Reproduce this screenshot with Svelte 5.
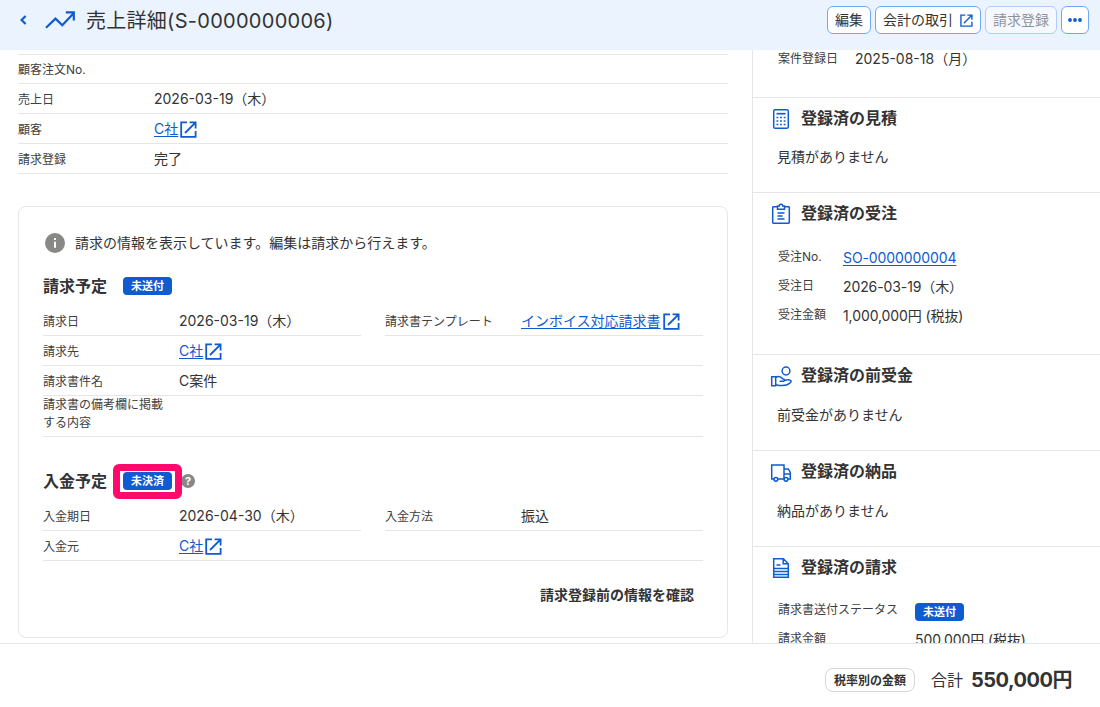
<script lang="ts">
    type Field = { label: string; value?: string; link?: boolean; external?: boolean; badge?: boolean; half?: boolean; tall?: boolean };
    type Section = { title: string; icon: string; empty?: string; labelWidth?: string; fields?: Field[] };

    const saleFields: Field[] = [
        { label: '顧客注文No.' },
        { label: '売上日', value: '2026-03-19（木）' },
        { label: '顧客', value: 'C社', link: true, external: true },
        { label: '請求登録', value: '完了' }
    ];

    const billingFields: Field[] = [
        { label: '請求日', value: '2026-03-19（木）', half: true },
        { label: '請求書テンプレート', value: 'インボイス対応請求書', link: true, external: true, half: true },
        { label: '請求先', value: 'C社', link: true, external: true },
        { label: '請求書件名', value: 'C案件' },
        { label: '請求書の備考欄に掲載する内容', tall: true }
    ];

    const paymentFields: Field[] = [
        { label: '入金期日', value: '2026-04-30（木）', half: true },
        { label: '入金方法', value: '振込', half: true },
        { label: '入金元', value: 'C社', link: true, external: true }
    ];

    const sections: Section[] = [
        { title: '登録済の見積', icon: 'calculator', empty: '見積がありません' },
        {
            title: '登録済の受注',
            icon: 'clipboard',
            fields: [
                { label: '受注No.', value: 'SO-0000000004', link: true },
                { label: '受注日', value: '2026-03-19（木）' },
                { label: '受注金額', value: '1,000,000円 (税抜)' }
            ]
        },
        { title: '登録済の前受金', icon: 'hand', empty: '前受金がありません' },
        { title: '登録済の納品', icon: 'truck', empty: '納品がありません' },
        {
            title: '登録済の請求',
            icon: 'document',
            labelWidth: '137px',
            fields: [
                { label: '請求書送付ステータス', value: '未送付', badge: true },
                { label: '請求金額', value: '500,000円 (税抜)' }
            ]
        }
    ];
</script>

{#snippet externalIcon(size: number)}
    <svg class="external" width={size} height={size} viewBox="0 0 17 17" fill="none" stroke="currentColor" stroke-width="1.8">
        <path d="M7 1.4H1.2v14.4h14.4V10" />
        <path d="M9.6 1.4h6v6M15.4 1.6L5 12" />
    </svg>
{/snippet}

{#snippet fieldValue(field: Field)}
    {#if field.badge}
        <span class="badge">{field.value}</span>
    {:else if field.link}
        <a href="#top">{field.value}</a>{#if field.external}{@render externalIcon(17)}{/if}
    {:else}
        {field.value ?? ''}
    {/if}
{/snippet}

{#snippet fieldGrid(fields: Field[])}
    <dl class="fields">
        {#each fields as field}
            <div class="field" class:half={field.half} class:tall={field.tall}>
                <dt>{field.label}</dt>
                <dd>{@render fieldValue(field)}</dd>
            </div>
        {/each}
    </dl>
{/snippet}

<div class="page">
    <header>
        <svg class="back" width="8" height="10" viewBox="0 0 8 10" fill="none" stroke="currentColor" stroke-width="2.2">
            <path d="M6.6 1L2.6 5l4 4" />
        </svg>
        <svg class="trend" width="30" height="18" viewBox="0 0 30 18" fill="none" stroke="currentColor" stroke-width="2.2">
            <path d="M1 16.8L10.5 7.6l6.8 6.6L28.4 2.4M20.8 1.4h8v8" />
        </svg>
        <h1>売上詳細(S-0000000006)</h1>
        <div class="actions">
            <button>編集</button>
            <button class="with-icon">会計の取引{@render externalIcon(13)}</button>
            <button disabled>請求登録</button>
            <button class="more" aria-label="メニュー">
                <svg width="14" height="4" viewBox="0 0 14 4" fill="currentColor">
                    <circle cx="2" cy="2" r="1.9" /><circle cx="7" cy="2" r="1.9" /><circle cx="12" cy="2" r="1.9" />
                </svg>
            </button>
        </div>
    </header>

    <div class="content">
        <main>
            <div class="sale">
                {@render fieldGrid(saleFields)}
            </div>

            <section class="card">
                <p class="notice">
                    <svg width="20" height="20" viewBox="0 0 20 20">
                        <circle cx="10" cy="10" r="10" fill="#888886" />
                        <path d="M9 5h2v2H9zM9 8.7h2v6H9z" fill="#fff" />
                    </svg>
                    請求の情報を表示しています。編集は請求から行えます。
                </p>

                <div class="heading">
                    <h2>請求予定</h2>
                    <span class="badge">未送付</span>
                </div>
                {@render fieldGrid(billingFields)}

                <div class="heading payment">
                    <h2>入金予定</h2>
                    <span class="badge marked">未決済</span>
                    <span class="help">?</span>
                </div>
                {@render fieldGrid(paymentFields)}

                <div class="confirm">請求登録前の情報を確認</div>
            </section>
        </main>

        <aside>
            <div class="registered">
                <span class="label">案件登録日</span>
                <span class="date">2025-08-18（月）</span>
            </div>
            {#each sections as section}
                <section class="related">
                    <h3>
                        <svg width="22" height="22" viewBox="0 0 22 22" fill="none" stroke="currentColor" stroke-width="1.5">
                            {#if section.icon === 'calculator'}
                                <rect x="3.7" y="1.7" width="14.6" height="18.6" rx="1.6" />
                                <path d="M6.5 5.7h9" stroke-width="1.7" />
                                <path d="M6.5 9.5h9M6.5 13h9M6.5 16.5h9" stroke-dasharray="1.8 1.8" stroke-width="1.6" />
                            {:else if section.icon === 'clipboard'}
                                <path d="M7 3.7H3.4a.7.7 0 0 0-.7.7v15.2c0 .4.3.7.7.7h15.2a.7.7 0 0 0 .7-.7V4.4a.7.7 0 0 0-.7-.7H15" />
                                <path d="M7.5 3h1.8a1.7 1.7 0 0 1 3.4 0h1.8v3.2h-7zM7.5 10h7M7.5 13h5M7.5 16h7" />
                            {:else if section.icon === 'hand'}
                                <circle cx="16" cy="6" r="3.9" />
                                <path d="M1.7 11.7h4v9h-4zM5.7 12.5c2-1.300 4.500-1 6 .4l1.300 1c2 .2 2.200 2.400 0 2.400H9.700M14 15.500c2.500-.8 6-1.400 7 .3.500.9-.3 1.700-1.500 2.600-3 2.700-8 2.600-13.800 1.300" />
                            {:else if section.icon === 'truck'}
                                <path d="M4 18H1.7V4h12.300V18H8M14 8h4.300l2 3.500V18H18M14 13h6.300" />
                                <circle cx="5.9" cy="18.300" r="1.900" />
                                <circle cx="16" cy="18.300" r="1.900" />
                            {:else}
                                <path d="M3.7 1.7h9.6l5 5v13.6H3.7zM13.2 2v4.8H18M6.5 8h4M4 11.500h14M4 14.500h14M4 17.500h14" />
                            {/if}
                        </svg>
                        {section.title}
                    </h3>
                    {#if section.empty}
                        <p>{section.empty}</p>
                    {:else}
                        <dl style="grid-template-columns: {section.labelWidth ?? '65px'} 1fr">
                            {#each section.fields ?? [] as field}
                                <dt>{field.label}</dt>
                                <dd>{@render fieldValue(field)}</dd>
                            {/each}
                        </dl>
                    {/if}
                </section>
            {/each}
        </aside>
    </div>

    <footer>
        <button class="tax">税率別の金額</button>
        <span class="total-label">合計</span>
        <strong>550,000円</strong>
    </footer>
</div>

<style>
    :global(body) {
        margin: 0;
        overflow: hidden;
    }

    .page {
        height: 707px;
        display: flex;
        flex-direction: column;
        overflow: hidden;
        background: #fff;
        color: #333;
        font-family: Inter, "Noto Sans CJK JP", sans-serif;
        font-size: 14px;
        line-height: 20px;
    }

    h1, h2, h3, p, dl, dd {
        margin: 0;
    }

    a {
        color: #0f5bd0;
        text-underline-offset: 2px;
    }

    header {
        flex: none;
        box-sizing: border-box;
        height: 50px;
        padding: 0 11px 10px 19px;
        display: flex;
        align-items: center;
        background: #ebf3ff;
    }

    .back, .trend {
        color: #0f5bd0;
    }

    .trend {
        margin-left: 18px;
    }

    h1 {
        margin: 2px 0 0 11px;
        font-size: 20px;
        font-weight: 400;
        letter-spacing: 0.28px;
        line-height: 30px;
    }

    .actions {
        margin-left: auto;
        display: flex;
        gap: 4px;
    }

    button {
        box-sizing: border-box;
        height: 28px;
        padding: 0 7px;
        display: flex;
        align-items: center;
        justify-content: center;
        border: 1px solid #6ea8fc;
        border-radius: 6px;
        background: #fff;
        color: #333;
        font: inherit;
        white-space: nowrap;
    }

    button:disabled {
        opacity: 0.5;
    }

    .with-icon {
        gap: 7px;
    }

    .more {
        width: 28px;
        padding: 0;
        color: #0f5bd0;
    }

    .external {
        flex: none;
        color: #0f5bd0;
    }

    .content {
        flex: 1;
        min-height: 0;
        display: flex;
        overflow: hidden;
    }

    main {
        box-sizing: border-box;
        width: 752px;
        padding: 4px 24px 0 18px;
    }

    .sale {
        height: 152px;
    }

    .sale .fields {
        border-top: 1px solid #e6e6e6;
    }

    .sale .field:first-child {
        height: 29px;
    }

    .fields {
        display: grid;
        grid-template-columns: 1fr 1fr;
        column-gap: 24px;
    }

    .field {
        grid-column: span 2;
        box-sizing: border-box;
        height: 30px;
        display: flex;
        align-items: center;
        border-bottom: 1px solid #e6e6e6;
    }

    .field.half {
        grid-column: span 1;
    }

    .field.tall {
        height: 41px;
    }

    dt, .label {
        color: #404040;
        font-size: 12px;
        line-height: 18px;
    }

    .field dt {
        flex: none;
        width: 124px;
        margin: 2px 12px 0 0;
    }

    .field.tall dt {
        margin-top: -4px;
    }

    .field dd {
        display: flex;
        align-items: center;
    }

    .field .external {
        margin: 2px 0 0 2px;
    }

    .card {
        box-sizing: border-box;
        height: 432px;
        padding: 0 24px;
        border: 1px solid #e6e6e6;
        border-radius: 8px;
    }

    .notice {
        padding: 26px 0 0 2px;
        display: flex;
        gap: 10px;
    }

    .heading {
        margin-top: 13px;
        height: 40px;
        display: flex;
        align-items: center;
    }

    h2 {
        margin-right: 16px;
        font-size: 16px;
        font-weight: 700;
        line-height: 24px;
    }

    .payment {
        margin-top: 24px;
    }

    .badge {
        box-sizing: border-box;
        height: 18px;
        padding: 0 8px;
        display: inline-block;
        border-radius: 4px;
        background: #0f5bd0;
        color: #fff;
        font-size: 11px;
        font-weight: 700;
        line-height: 19px;
    }

    .marked {
        position: relative;
    }

    .marked::after {
        content: "";
        position: absolute;
        z-index: 1;
        inset: -8px -10px -9px;
        border: 7px solid #ff0a6c;
        border-radius: 6px;
    }

    .help {
        width: 14px;
        height: 14px;
        margin-left: 9px;
        border-radius: 50%;
        background: #888886;
        color: #fff;
        font-size: 11px;
        font-weight: 700;
        line-height: 14px;
        text-align: center;
    }

    .confirm {
        padding: 24px 9px 0 0;
        font-weight: 700;
        text-align: right;
    }

    aside {
        flex: 1;
        border-left: 1px solid #e6e6e6;
        overflow: hidden;
    }

    .registered {
        box-sizing: border-box;
        height: 46.67px;
        padding-left: 25px;
        display: flex;
        align-items: flex-start;
    }

    .registered .label {
        width: 77px;
    }

    .registered .date {
        margin-top: -1px;
    }

    .related {
        box-sizing: border-box;
        min-height: 95.67px;
        padding: 8px 18px 0 17px;
        border-top: 1px solid #e6e6e6;
    }

    h3 {
        display: flex;
        align-items: center;
        gap: 9px;
        font-size: 16px;
        font-weight: 700;
        line-height: 24px;
    }

    h3 svg {
        margin-top: 2px;
        color: #0f5bd0;
    }

    .related p {
        padding: 17.7px 0 0 7px;
    }

    .related dl {
        padding: 18.7px 0 23.3px 8px;
        display: grid;
        grid-auto-rows: 29px;
    }

    .related dt {
        padding-top: 4px;
    }

    .related dd {
        padding-top: 4px;
        letter-spacing: -0.1px;
    }

    .related .badge {
        letter-spacing: 0;
    }

    footer {
        flex: none;
        box-sizing: border-box;
        height: 64px;
        padding: 9px 28px 0 0;
        display: flex;
        align-items: center;
        justify-content: flex-end;
        border-top: 1px solid #e6e6e6;
        background: #fff;
    }

    .tax {
        height: 24px;
        padding: 1px 8px 0;
        border-color: #d7d7d7;
        border-radius: 8px;
        font-size: 12px;
        font-weight: 700;
    }

    .total-label {
        margin: 0 8px 0 16px;
        font-size: 16px;
    }

    strong {
        font-size: 20px;
        font-weight: 700;
        letter-spacing: -0.5px;
    }
</style>
